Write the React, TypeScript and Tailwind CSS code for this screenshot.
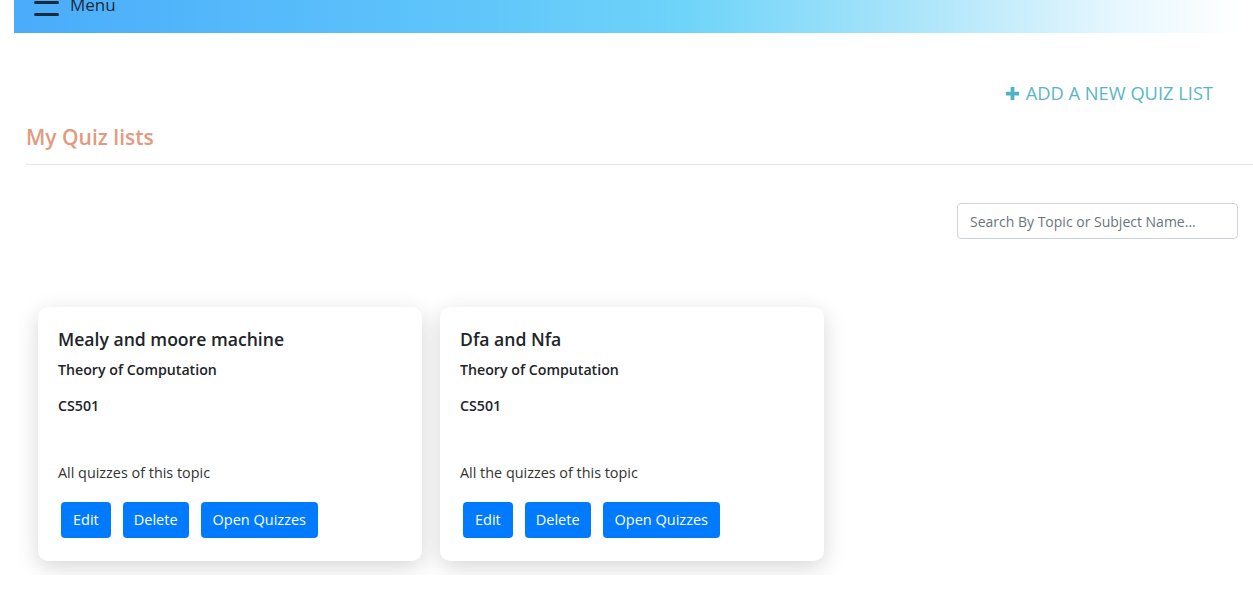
import React from "react";

const font = { fontFamily: '"Open Sans", "Noto Sans", sans-serif' };

function Card({ title, desc }: { title: string; desc: string }) {
  return (
    <div className="w-[384px] h-[254px] bg-white rounded-[10px] shadow-[0_6px_22px_rgba(0,0,0,0.16)] pt-[20px] pl-[20px] pr-[20px] flex flex-col">
      <div className="text-[17.6px] leading-[24px] font-semibold text-[#212529]">{title}</div>
      <div className="mt-[9px] text-[14.2px] leading-[20px] font-semibold text-[#212529]">Theory of Computation</div>
      <div className="mt-[16px] text-[14.2px] leading-[20px] font-semibold text-[#212529]">CS501</div>
      <div className="mt-[47px] text-[14.4px] leading-[20px] text-[#333]">{desc}</div>
      <div className="mt-[19px] ml-[3px] flex gap-[12px]">
        <button className="h-[36px] px-[12px] rounded-[4px] bg-[#007bff] text-white text-[14.5px]">Edit</button>
        <button className="h-[36px] px-[11px] rounded-[4px] bg-[#007bff] text-white text-[14.5px]">Delete</button>
        <button className="h-[36px] px-[12px] rounded-[4px] bg-[#007bff] text-white text-[14.5px]">Open Quizzes</button>
      </div>
    </div>
  );
}

export default function App() {
  return (
    <div className="w-[1253px] h-[607px] bg-white overflow-hidden" style={font}>
      <div className="ml-[14px] w-[1226px] h-[33px] bg-[linear-gradient(to_right,#4aacfb_0%,#5ec4fa_35%,#6fd4f9_55%,#a6e3fa_72%,#e6f7fe_90%,#ffffff_100%)] flex items-start overflow-hidden">
        <div className="ml-[20px] mt-[-11px] flex flex-col gap-[9.5px] w-[25px]">
          <div className="h-[2.5px] bg-[#1b2a3a] rounded-full" />
          <div className="h-[2.5px] bg-[#1b2a3a] rounded-full" />
          <div className="h-[2.5px] bg-[#1b2a3a] rounded-full" />
        </div>
        <div className="ml-[11px] mt-[-7px] text-[17px] leading-[24px] text-[#1b2a3a]">Menu</div>
      </div>

      <div className="flex justify-end pr-[40px] mt-[49px]">
        <div className="flex items-center gap-[6px] text-[#5ab6c6] text-[18.3px] leading-[22px]">
          <svg width="15" height="15" viewBox="0 0 16 16"><path d="M6 1h4v5h5v4h-5v5H6v-5H1V6h5z" fill="#4fb3c4" /></svg>
          <span>ADD A NEW QUIZ LIST</span>
        </div>
      </div>

      <div className="ml-[26px] mt-[19px] text-[21px] leading-[28px] font-semibold text-[#e39a80]">My Quiz lists</div>
      <div className="ml-[26px] mt-[13px] h-px bg-[#e5e5e5]" />

      <div className="flex justify-end pr-[15px] mt-[38px]">
        <div className="w-[281px] h-[36px] border border-[#ced4da] rounded-[4px] flex items-center px-[12px] text-[14px] text-[#6c757d]">
          Search By Topic or Subject Name...
        </div>
      </div>

      <div className="ml-[14px] mt-[44px] w-[840px] h-[292px] overflow-hidden pt-[24px] pl-[24px] flex gap-[18px]">
        <Card title="Mealy and moore machine" desc="All quizzes of this topic" />
        <Card title="Dfa and Nfa" desc="All the quizzes of this topic" />
      </div>
    </div>
  );
}
